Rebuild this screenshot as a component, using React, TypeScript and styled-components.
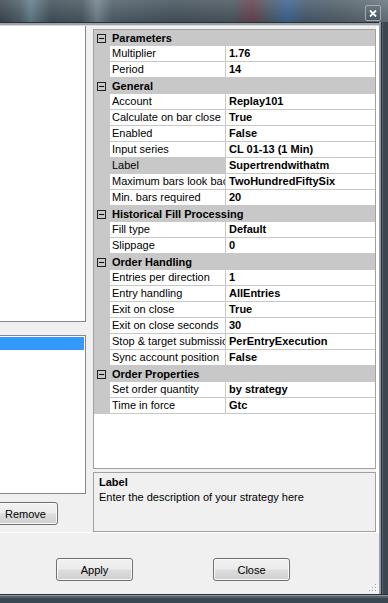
import React from 'react';
import styled, { createGlobalStyle } from 'styled-components';

const GlobalStyle = createGlobalStyle`
  html, body {
    margin: 0;
    padding: 0;
    background: #3f4a53;
  }
  body {
    font-family: "Liberation Sans", Arial, sans-serif;
    font-size: 11px;
    color: #000;
  }
`;

interface IProp {
  name: string;
  value: string;
  selected?: boolean;
}

interface ICategory {
  title: string;
  props: IProp[];
}

const categories: ICategory[] = [
  {
    title: 'Parameters',
    props: [
      { name: 'Multiplier', value: '1.76' },
      { name: 'Period', value: '14' },
    ],
  },
  {
    title: 'General',
    props: [
      { name: 'Account', value: 'Replay101' },
      { name: 'Calculate on bar close', value: 'True' },
      { name: 'Enabled', value: 'False' },
      { name: 'Input series', value: 'CL 01-13 (1 Min)' },
      { name: 'Label', value: 'Supertrendwithatm', selected: true },
      { name: 'Maximum bars look back', value: 'TwoHundredFiftySix' },
      { name: 'Min. bars required', value: '20' },
    ],
  },
  {
    title: 'Historical Fill Processing',
    props: [
      { name: 'Fill type', value: 'Default' },
      { name: 'Slippage', value: '0' },
    ],
  },
  {
    title: 'Order Handling',
    props: [
      { name: 'Entries per direction', value: '1' },
      { name: 'Entry handling', value: 'AllEntries' },
      { name: 'Exit on close', value: 'True' },
      { name: 'Exit on close seconds', value: '30' },
      { name: 'Stop & target submission', value: 'PerEntryExecution' },
      { name: 'Sync account position', value: 'False' },
    ],
  },
  {
    title: 'Order Properties',
    props: [
      { name: 'Set order quantity', value: 'by strategy' },
      { name: 'Time in force', value: 'Gtc' },
    ],
  },
];

const Window = styled.div`
  width: 388px;
  height: 603px;
  display: flex;
  flex-direction: column;
  overflow: hidden;
`;

const TitleBar = styled.div`
  height: 22px;
  flex: none;
  display: flex;
  justify-content: flex-end;
  align-items: flex-start;
  padding-right: 7px;
  box-sizing: border-box;
  background:
    linear-gradient(180deg, rgba(255, 255, 255, 0.12), rgba(0, 0, 0, 0.12)),
    linear-gradient(
      90deg,
      #3d4850 0%,
      #4f606b 5%,
      #64808c 8%,
      #45535d 13%,
      #4b5861 21%,
      #74848e 25%,
      #53616b 29%,
      #47545e 45%,
      #4d5961 60%,
      #6a4450 65%,
      #4f5a66 69%,
      #3e6694 74%,
      #4a5d70 79%,
      #55626b 88%,
      #6a7780 100%
    );
`;

const CloseButton = styled.div`
  margin-top: 5px;
  width: 16px;
  height: 16px;
  box-sizing: border-box;
  border: 1px solid #a3abb1;
  border-radius: 2px;
  background: linear-gradient(#6a7882, #4c5962);
  display: flex;
  align-items: center;
  justify-content: center;
`;

const FrameRow = styled.div`
  flex: 1;
  display: flex;
  min-height: 0;
`;

const Client = styled.div`
  width: 380px;
  display: flex;
  flex-direction: column;
  background: #f0f0f0;
  border-right: 1px solid #a0a4a8;
  box-sizing: border-box;
`;

const TopEdge = styled.div`
  height: 4px;
  flex: none;
  background: linear-gradient(#283037 0 1px, #9da2a6 1px 3px, #d9d9d9 3px);
`;

const RightFrame = styled.div`
  width: 8px;
  background: linear-gradient(
    90deg,
    #8e979d 0 1px,
    #2b333a 1px 2px,
    #55616b 2px 3px,
    #3b4650 3px
  );
`;

const BottomFrame = styled.div`
  height: 9px;
  flex: none;
  background: linear-gradient(
    #2b333a 0 1px,
    #8e979d 1px 2px,
    #55616b 2px 4px,
    #3b4650 4px
  );
`;

const Main = styled.div`
  height: 506px;
  flex: none;
  display: flex;
  gap: 7px;
`;

const LeftPanel = styled.div`
  width: 86px;
  display: flex;
  flex-direction: column;
`;

const ListBox = styled.div<{ $height: number; $top?: boolean }>`
  height: ${(p) => p.$height}px;
  box-sizing: border-box;
  background: #fff;
  border-right: 1px solid #828790;
  border-bottom: 1px solid #828790;
  border-top: ${(p) => (p.$top ? '1px solid #828790' : 'none')};
  padding: 1px 1px 0 0;
`;

const ListItem = styled.div<{ $selected?: boolean }>`
  height: 13px;
  background: ${(p) => (p.$selected ? '#3399ff' : 'transparent')};
`;

const RightPanel = styled.div`
  width: 286px;
  box-sizing: border-box;
  border-right: 3px solid #fff;
  padding-top: 3px;
  display: flex;
  flex-direction: column;
  gap: 3px;
`;

const Grid = styled.div`
  height: 440px;
  box-sizing: border-box;
  border: 1px solid #a0a0a0;
  background: #fff;
  overflow: hidden;
`;

const CategoryRow = styled.div`
  height: 16px;
  display: flex;
  align-items: center;
  background: #c8c8c8;
`;

const Gutter = styled.div`
  width: 16px;
  height: 16px;
  flex: none;
  background: #c8c8c8;
  display: flex;
  align-items: center;
  padding-left: 3px;
  box-sizing: border-box;
`;

const Expander = styled.span`
  width: 9px;
  height: 9px;
  box-sizing: border-box;
  border: 1px solid #222;
  display: flex;
  align-items: center;
  justify-content: center;

  &::after {
    content: '';
    width: 5px;
    height: 1px;
    background: #000;
  }
`;

const CategoryTitle = styled.span`
  font-weight: bold;
  padding-left: 2px;
  line-height: 15px;
  white-space: nowrap;
`;

const PropRow = styled.div`
  height: 16px;
  display: grid;
  grid-template-columns: 16px 116px 1fr;
`;

const NameCell = styled.div<{ $selected?: boolean }>`
  height: 16px;
  box-sizing: border-box;
  padding-left: 2px;
  line-height: 15px;
  white-space: nowrap;
  overflow: hidden;
  background: ${(p) => (p.$selected ? '#c8c8c8' : '#fff')};
  border-right: 1px solid #c8c8c8;
  border-bottom: 1px solid #c8c8c8;
`;

const ValueCell = styled.div`
  height: 16px;
  box-sizing: border-box;
  padding-left: 3px;
  line-height: 15px;
  font-weight: bold;
  white-space: nowrap;
  overflow: hidden;
  border-bottom: 1px solid #c8c8c8;
`;

const Description = styled.div`
  height: 60px;
  box-sizing: border-box;
  border: 1px solid #a0a0a0;
  background: #f0f0f0;
  padding: 2px 5px;
  line-height: 15px;
`;

const DescTitle = styled.div`
  font-weight: bold;
`;

const ButtonBar = styled.div`
  height: 62px;
  flex: none;
  box-sizing: border-box;
  border-top: 1px solid #fff;
  padding: 25px 0 0 56px;
  display: flex;
  align-items: flex-start;
  gap: 80px;
  position: relative;
`;

const Button = styled.button<{ $width: number; $offset?: number }>`
  width: ${(p) => p.$width}px;
  height: 23px;
  flex: none;
  margin-left: ${(p) => p.$offset ?? 0}px;
  padding: 0;
  border: 1px solid #707070;
  border-radius: 3px;
  box-shadow: inset 0 0 0 1px #fafafa;
  background: linear-gradient(#f2f2f2 0%, #ebebeb 48%, #dddddd 52%, #cfcfcf 100%);
  font-family: "Liberation Sans", Arial, sans-serif;
  font-size: 11px;
  color: #000;
`;

const Grip = styled.svg`
  position: absolute;
  right: 2px;
  bottom: 2px;
`;

const App = () => (
  <>
    <GlobalStyle />
    <Window>
      <TitleBar>
        <CloseButton>
          <svg width="8" height="7" viewBox="0 0 8 7">
            <path d="M1 0.5 L7 6.5 M7 0.5 L1 6.5" stroke="#fff" strokeWidth="1.8" />
          </svg>
        </CloseButton>
      </TitleBar>
      <FrameRow>
        <Client>
          <TopEdge />
          <Main>
            <LeftPanel>
              <ListBox $height={296} />
              <div style={{ height: 13 }} />
              <ListBox $height={159} $top>
                <ListItem $selected />
              </ListBox>
              <div style={{ height: 8 }} />
              <Button $width={65} $offset={-7}>
                Remove
              </Button>
            </LeftPanel>
            <RightPanel>
              <Grid>
                {categories.map((cat) => (
                  <div key={cat.title}>
                    <CategoryRow>
                      <Gutter>
                        <Expander />
                      </Gutter>
                      <CategoryTitle>{cat.title}</CategoryTitle>
                    </CategoryRow>
                    {cat.props.map((prop) => (
                      <PropRow key={prop.name}>
                        <Gutter />
                        <NameCell $selected={prop.selected}>{prop.name}</NameCell>
                        <ValueCell>{prop.value}</ValueCell>
                      </PropRow>
                    ))}
                  </div>
                ))}
              </Grid>
              <Description>
                <DescTitle>Label</DescTitle>
                <div>Enter the description of your strategy here</div>
              </Description>
            </RightPanel>
          </Main>
          <ButtonBar>
            <Button $width={77}>Apply</Button>
            <Button $width={77}>Close</Button>
            <Grip width="8" height="8" viewBox="0 0 8 8">
              {[
                [6, 0],
                [6, 3],
                [3, 3],
                [6, 6],
                [3, 6],
                [0, 6],
              ].map(([x, y]) => (
                <g key={`${x}-${y}`}>
                  <rect x={x + 1} y={y + 1} width="1" height="1" fill="#fff" />
                  <rect x={x} y={y} width="1" height="1" fill="#a0a0a0" />
                </g>
              ))}
            </Grip>
          </ButtonBar>
        </Client>
        <RightFrame />
      </FrameRow>
      <BottomFrame />
    </Window>
  </>
);

export default App;
